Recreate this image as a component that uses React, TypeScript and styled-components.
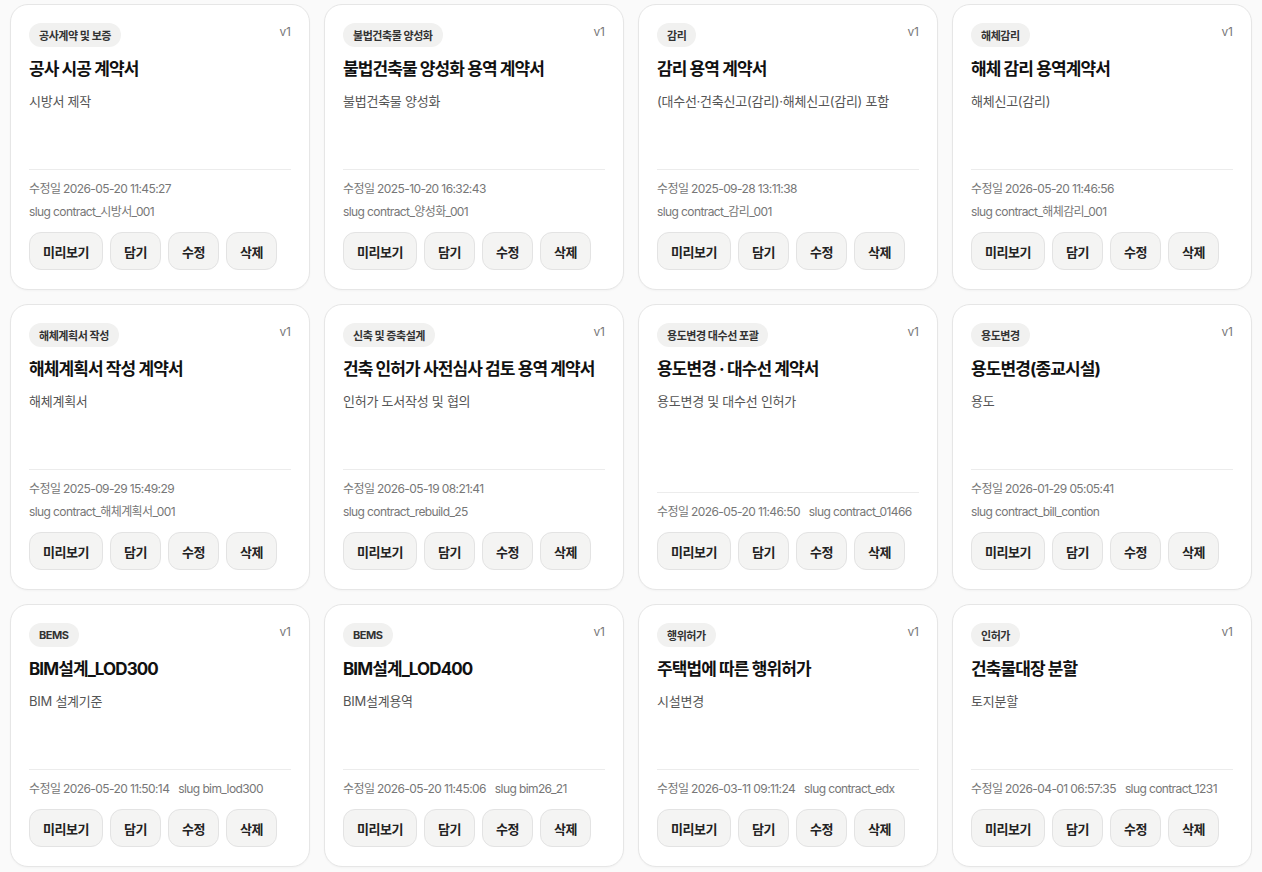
import React from "react";
import styled, { createGlobalStyle } from "styled-components";

const GlobalStyle = createGlobalStyle`
  html, body {
    margin: 0;
    background: #fafafa;
  }
  body {
    font-family: "Inter", "Noto Sans CJK KR", sans-serif;
    color: #111;
    -webkit-font-smoothing: antialiased;
  }
`;

type Contract = {
  category: string;
  title: string;
  desc: string;
  updated: string;
  slug: string;
  version: string;
};

const contracts: Contract[] = [
  { category: "공사계약 및 보증", title: "공사 시공 계약서", desc: "시방서 제작", updated: "2026-05-20 11:45:27", slug: "contract_시방서_001", version: "v1" },
  { category: "불법건축물 양성화", title: "불법건축물 양성화 용역 계약서", desc: "불법건축물 양성화", updated: "2025-10-20 16:32:43", slug: "contract_양성화_001", version: "v1" },
  { category: "감리", title: "감리 용역 계약서", desc: "(대수선·건축신고(감리)·해체신고(감리) 포함", updated: "2025-09-28 13:11:38", slug: "contract_감리_001", version: "v1" },
  { category: "해체감리", title: "해체 감리 용역계약서", desc: "해체신고(감리)", updated: "2026-05-20 11:46:56", slug: "contract_해체감리_001", version: "v1" },
  { category: "해체계획서 작성", title: "해체계획서 작성 계약서", desc: "해체계획서", updated: "2025-09-29 15:49:29", slug: "contract_해체계획서_001", version: "v1" },
  { category: "신축 및 증축설계", title: "건축 인허가 사전심사 검토 용역 계약서", desc: "인허가 도서작성 및 협의", updated: "2026-05-19 08:21:41", slug: "contract_rebuild_25", version: "v1" },
  { category: "용도변경 대수선 포괄", title: "용도변경 · 대수선 계약서", desc: "용도변경 및 대수선 인허가", updated: "2026-05-20 11:46:50", slug: "contract_01466", version: "v1" },
  { category: "용도변경", title: "용도변경(종교시설)", desc: "용도", updated: "2026-01-29 05:05:41", slug: "contract_bill_contion", version: "v1" },
  { category: "BEMS", title: "BIM설계_LOD300", desc: "BIM 설계기준", updated: "2026-05-20 11:50:14", slug: "bim_lod300", version: "v1" },
  { category: "BEMS", title: "BIM설계_LOD400", desc: "BIM설계용역", updated: "2026-05-20 11:45:06", slug: "bim26_21", version: "v1" },
  { category: "행위허가", title: "주택법에 따른 행위허가", desc: "시설변경", updated: "2026-03-11 09:11:24", slug: "contract_edx", version: "v1" },
  { category: "인허가", title: "건축물대장 분할", desc: "토지분할", updated: "2026-04-01 06:57:35", slug: "contract_1231", version: "v1" },
];

const Page = styled.div`
  padding: 4px 10px 10px;
`;

const Grid = styled.div`
  display: grid;
  grid-template-columns: repeat(4, 300px);
  gap: 14px;
`;

const Card = styled.div`
  box-sizing: border-box;
  display: flex;
  flex-direction: column;
  background: #fff;
  border: 1px solid #e6e6e6;
  border-radius: 18px;
  padding: 18px 18px 19px;
  box-shadow: 0 1px 2px rgba(0, 0, 0, 0.03);
`;

const Body = styled.div`
  flex: 1;
  min-height: 146px;
  display: flex;
  flex-direction: column;
`;

const TopRow = styled.div`
  display: flex;
  justify-content: space-between;
  align-items: flex-start;
`;

const Badge = styled.span`
  display: inline-flex;
  align-items: center;
  height: 24px;
  padding: 0 10px;
  border-radius: 999px;
  background: #f1f1f0;
  color: #333;
  font-size: 11px;
  font-weight: 700;
  letter-spacing: -0.45px;
  white-space: nowrap;
`;

const Version = styled.span`
  font-size: 12px;
  line-height: 18px;
  color: #777;
`;

const Title = styled.h3`
  margin: 10px 0 0;
  font-size: 17px;
  line-height: 24px;
  font-weight: 700;
  letter-spacing: -0.9px;
  color: #111;
`;

const Desc = styled.p`
  margin: 10px 0 0;
  font-size: 13px;
  line-height: 20px;
  letter-spacing: -0.25px;
  color: #555;
`;

const Footer = styled.div`
  border-top: 1px solid #ececec;
  padding-top: 10px;
`;

const Meta = styled.div`
  display: flex;
  flex-wrap: wrap;
  column-gap: 9px;
  row-gap: 5px;
  font-size: 12px;
  line-height: 18px;
  letter-spacing: -0.6px;
  color: #777;
`;

const MetaItem = styled.span`
  white-space: nowrap;
`;

const Actions = styled.div`
  display: flex;
  gap: 7px;
  margin-top: 11px;
`;

const ActionButton = styled.button`
  box-sizing: border-box;
  height: 38px;
  padding: 0 13px;
  border: 1px solid #e3e3e3;
  border-radius: 12px;
  background: #f4f4f3;
  color: #222;
  font-family: inherit;
  font-size: 13px;
  font-weight: 700;
  letter-spacing: -0.45px;
  cursor: pointer;
`;

function ContractCard({ item }: { item: Contract }) {
  return (
    <Card>
      <Body>
        <TopRow>
          <Badge>{item.category}</Badge>
          <Version>{item.version}</Version>
        </TopRow>
        <Title>{item.title}</Title>
        <Desc>{item.desc}</Desc>
      </Body>
      <Footer>
        <Meta>
          <MetaItem>수정일 {item.updated}</MetaItem>
          <MetaItem>slug {item.slug}</MetaItem>
        </Meta>
        <Actions>
          <ActionButton>미리보기</ActionButton>
          <ActionButton>담기</ActionButton>
          <ActionButton>수정</ActionButton>
          <ActionButton>삭제</ActionButton>
        </Actions>
      </Footer>
    </Card>
  );
}

export default function App() {
  return (
    <Page>
      <GlobalStyle />
      <Grid>
        {contracts.map((c) => (
          <ContractCard key={c.slug} item={c} />
        ))}
      </Grid>
    </Page>
  );
}
